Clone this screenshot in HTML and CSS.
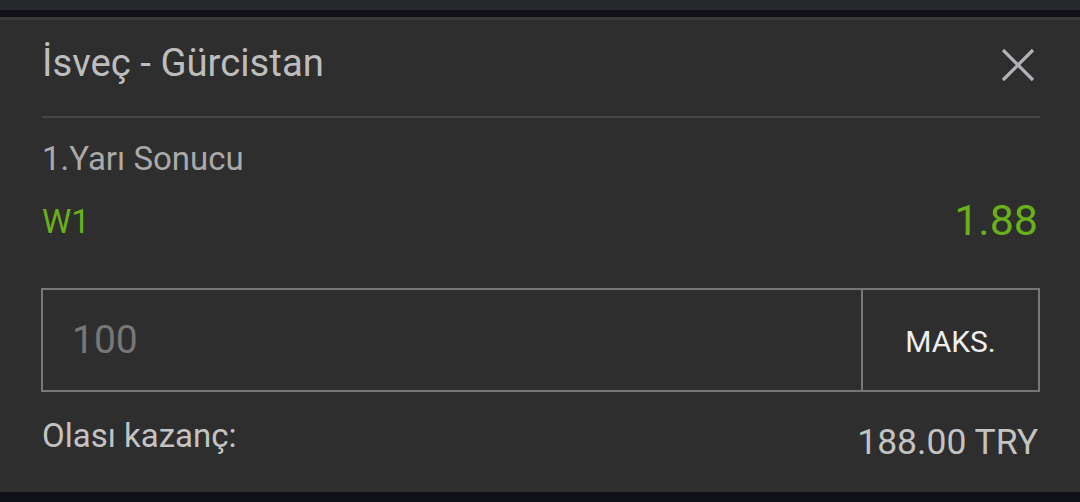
FILE: index.html
```html
<!DOCTYPE html>
<html>
<head>
<meta charset="utf-8">
<link rel="stylesheet" href="styles.css">
</head>
<body>
<div class="top-strip"></div>
<div class="gap"></div>
<div class="panel">
  <div class="header">
    <div class="title">İsveç - Gürcistan</div>
    <svg class="close" width="34" height="34" viewBox="0 0 34 34"><path d="M2 2 L32 32 M32 2 L2 32" stroke="#b0b2b8" stroke-width="3.2" fill="none"/></svg>
  </div>
  <div class="divider"></div>
  <div class="market">1.Yarı Sonucu</div>
  <div class="pick-row">
    <span class="pick">W1</span>
    <span class="odds">1.88</span>
  </div>
  <div class="stake">
    <div class="stake-input">100</div>
    <div class="stake-max">MAKS.</div>
  </div>
  <div class="win-row">
    <span class="win-label">Olası kazanç:</span>
    <span class="win-value">188.00 TRY</span>
  </div>
</div>
<div class="bottom-strip"></div>
</body>
</html>
```

FILE: styles.css
```css
html, body {
  margin: 0;
  padding: 0;
  background: #101017;
  font-family: Roboto, "Liberation Sans", sans-serif;
}
.top-strip {
  height: 10px;
  background: #27282c;
}
.gap {
  height: 7px;
  background: #111117;
}
.panel {
  height: 475px;
  box-sizing: border-box;
  background: #2e2e2e;
  border-top: 3px solid #3a3a3a;
  padding: 0 40px 0 42px;
  display: flex;
  flex-direction: column;
}
.header {
  display: flex;
  justify-content: space-between;
  align-items: flex-start;
  height: 96px;
  box-sizing: border-box;
  padding-top: 21px;
}
.title {
  font-size: 38.3px;
  line-height: 44px;
  color: #bdbdbd;
}
.close {
  margin-right: 5px;
  margin-top: 7px;
}
.divider {
  height: 2px;
  background: #474747;
}
.market {
  margin-top: 21px;
  font-size: 33px;
  line-height: 40px;
  color: #a9a9a9;
}
.pick-row {
  display: flex;
  justify-content: space-between;
  align-items: flex-start;
  margin-top: 16px;
  height: 50px;
}
.pick {
  margin-top: 7px;
  font-size: 33px;
  line-height: 40px;
  color: #69b01a;
}
.odds {
  font-size: 43px;
  line-height: 50px;
  color: #69b01a;
  margin-right: 2px;
}
.stake {
  margin-top: 43px;
  margin-left: -1px;
  height: 104px;
  box-sizing: border-box;
  border: 2px solid #777;
  display: flex;
}
.stake-input {
  flex: 1;
  display: flex;
  align-items: center;
  padding-left: 29px;
  font-size: 39px;
  color: #777;
  border-right: 2px solid #777;
}
.stake-max {
  width: 175px;
  display: flex;
  align-items: center;
  justify-content: center;
  padding-top: 3px;
  box-sizing: border-box;
  font-size: 30px;
  color: #eeeeee;
}
.win-row {
  display: flex;
  justify-content: space-between;
  align-items: flex-start;
  margin-top: 24px;
}
.win-label {
  font-size: 33px;
  line-height: 40px;
  color: #c3c3c3;
}
.win-value {
  margin-top: 5px;
  font-size: 35.5px;
  line-height: 42px;
  color: #c3c3c3;
  margin-right: 2px;
}
.bottom-strip {
  height: 10px;
  background: #101017;
}
```
